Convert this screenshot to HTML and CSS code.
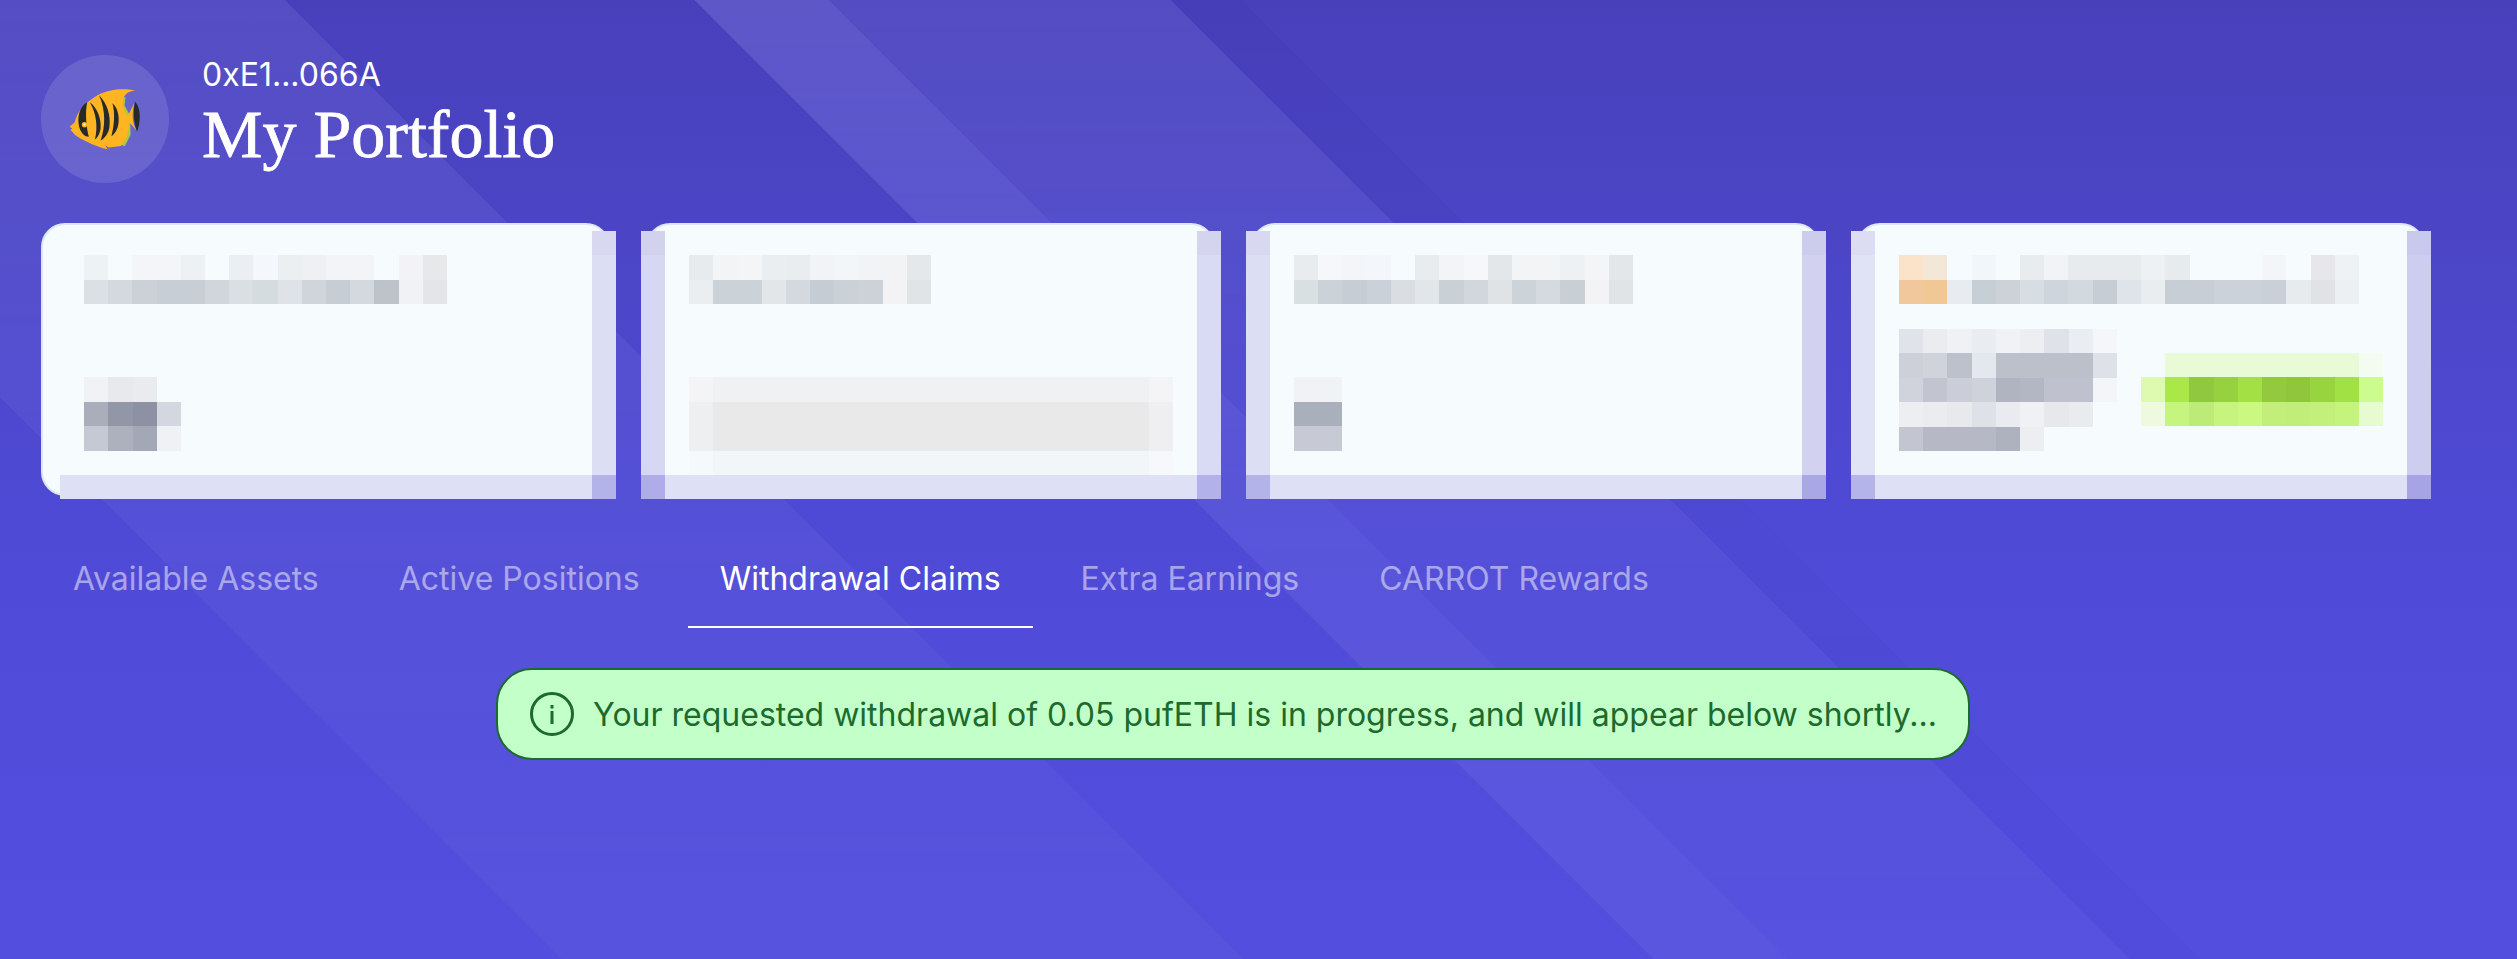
FILE: index.html
```html
<!DOCTYPE html>
<html lang="en">
<head>
    <meta charset="UTF-8">
    <title>My Portfolio</title>
    <link rel="stylesheet" href="styles.css">
</head>
<body>
    <div class="page">
        <header class="header">
            <div class="avatar">
                <svg class="fish" viewBox="118 120 214 190" width="72" height="64">
                    <path fill="#a9c93f" d="M276 150 L286 150 L283 175 L300 205 L301 262 L284 296 L270 290 Z"/>
                    <path fill="#ffb522" d="M120 238 L135 225 C142 195 160 170 205 143 C235 128 280 122 315 131 C295 133 282 140 278 160 C278 178 285 195 292 208 L313 165 C305 195 304 225 320 251 C310 240 305 232 295 224 C298 250 290 280 272 295 L236 300 L225 293 L233 305 C205 298 170 285 137 263 L122 247 L128 244 Z"/>
                    <path fill="#262a2b" d="M172 165 C150 178 143 205 147 232 C150 252 162 268 177 268 C170 240 165 200 172 165 Z"/>
                    <path fill="#262a2b" d="M180 165 C200 180 214 210 212 240 C211 255 204 270 195 276 C204 240 200 200 180 165 Z"/>
                    <path fill="#262a2b" d="M207 144 C232 170 243 205 238 240 C235 258 224 272 212 279 C226 240 228 190 207 144 Z"/>
                    <path fill="#262a2b" d="M247 168 C262 180 268 205 265 228 C263 245 255 260 244 266 C252 235 256 200 247 168 Z"/>
                    <path fill="#262a2b" d="M314 163 C325 175 330 195 328 215 C327 232 324 245 320 252 C310 225 308 195 314 163 Z"/>
                    <circle cx="164" cy="232" r="8" fill="#ffb522"/>
                    <circle cx="164" cy="231" r="3.5" fill="#fff1c9"/>
                </svg>
            </div>
            <div class="title-block">
                <div class="address">0xE1...066A</div>
                <h1 class="title">My Portfolio</h1>
            </div>
        </header>

        <section class="cards">
            <div class="card">
                <svg class="mosaic" viewBox="0 0 15 2" width="363" height="49" preserveAspectRatio="none" shape-rendering="crispEdges">
                    <rect x="0" y="0" width="1" height="1" fill="#eff2f4"/><rect x="2" y="0" width="2" height="1" fill="#f3f5f8"/><rect x="4" y="0" width="1" height="1" fill="#eef1f3"/><rect x="6" y="0" width="1" height="1" fill="#ebeef2"/><rect x="7" y="0" width="1" height="1" fill="#f4f7fb"/><rect x="8" y="0" width="1" height="1" fill="#ebeff2"/><rect x="9" y="0" width="1" height="1" fill="#eef0f4"/><rect x="10" y="0" width="2" height="1" fill="#f2f4f7"/><rect x="13" y="0" width="1" height="1" fill="#f3f3f7"/><rect x="14" y="0" width="1" height="1" fill="#e6e8ea"/>
                    <rect x="0" y="1" width="1" height="1" fill="#dcdfe4"/><rect x="1" y="1" width="1" height="1" fill="#d3d9df"/><rect x="2" y="1" width="1" height="1" fill="#cbd1d7"/><rect x="3" y="1" width="2" height="1" fill="#c7ced5"/><rect x="5" y="1" width="1" height="1" fill="#d1d6dc"/><rect x="6" y="1" width="1" height="1" fill="#d9dfe2"/><rect x="7" y="1" width="1" height="1" fill="#d5dcdf"/><rect x="8" y="1" width="1" height="1" fill="#dfe3e7"/><rect x="9" y="1" width="1" height="1" fill="#d0d5db"/><rect x="10" y="1" width="1" height="1" fill="#c7cdd4"/><rect x="11" y="1" width="1" height="1" fill="#d4d9df"/><rect x="12" y="1" width="1" height="1" fill="#bdc3cb"/><rect x="13" y="1" width="1" height="1" fill="#f0f2f5"/><rect x="14" y="1" width="1" height="1" fill="#e3e5e8"/>
                </svg>
                <div class="card-bottom">
                    <svg class="mosaic" viewBox="0 0 4 3" width="97" height="74" preserveAspectRatio="none" shape-rendering="crispEdges">
                        <rect x="0" y="0" width="1" height="1" fill="#f0f2f6"/><rect x="1" y="0" width="1" height="1" fill="#e7e9ed"/><rect x="2" y="0" width="1" height="1" fill="#e9ebef"/>
                        <rect x="0" y="1" width="1" height="1" fill="#a9aeba"/><rect x="1" y="1" width="1" height="1" fill="#9297a7"/><rect x="2" y="1" width="1" height="1" fill="#8c91a3"/><rect x="3" y="1" width="1" height="1" fill="#d4d7df"/>
                        <rect x="0" y="2" width="1" height="1" fill="#c6c9d3"/><rect x="1" y="2" width="1" height="1" fill="#adb1bd"/><rect x="2" y="2" width="1" height="1" fill="#a3a8b6"/><rect x="3" y="2" width="1" height="1" fill="#eff1f5"/>
                    </svg>
                </div>
                <div class="strip strip-right tone-b"></div>
                <div class="strip-bottom"></div>
            </div>

            <div class="card">
                <svg class="mosaic" viewBox="0 0 10 2" width="242" height="49" preserveAspectRatio="none" shape-rendering="crispEdges">
                    <rect x="0" y="0" width="1" height="1" fill="#e8ebed"/><rect x="1" y="0" width="1" height="1" fill="#f2f4f6"/><rect x="2" y="0" width="1" height="1" fill="#f3f5f7"/><rect x="3" y="0" width="1" height="1" fill="#ebeef1"/><rect x="4" y="0" width="1" height="1" fill="#eaedef"/><rect x="5" y="0" width="1" height="1" fill="#f1f3f6"/><rect x="6" y="0" width="1" height="1" fill="#f3f6f9"/><rect x="7" y="0" width="1" height="1" fill="#f1f3f6"/><rect x="8" y="0" width="1" height="1" fill="#f1f3f5"/><rect x="9" y="0" width="1" height="1" fill="#e5e8ea"/>
                    <rect x="0" y="1" width="1" height="1" fill="#ebeef0"/><rect x="1" y="1" width="2" height="1" fill="#ccd3d8"/><rect x="3" y="1" width="1" height="1" fill="#e2e6e8"/><rect x="4" y="1" width="1" height="1" fill="#d3d9de"/><rect x="5" y="1" width="1" height="1" fill="#c5ccd3"/><rect x="6" y="1" width="1" height="1" fill="#cad1d7"/><rect x="7" y="1" width="1" height="1" fill="#ccd2d8"/><rect x="8" y="1" width="1" height="1" fill="#f3f3f6"/><rect x="9" y="1" width="1" height="1" fill="#e1e4e6"/>
                </svg>
                <div class="card-bottom">
                    <svg class="mosaic mosaic-over" viewBox="0 0 20 4" width="484" height="98" preserveAspectRatio="none" shape-rendering="crispEdges">
                        <rect x="0" y="0" width="1" height="1" fill="#f4f4f6"/><rect x="1" y="0" width="18" height="1" fill="#f0f1f3"/><rect x="19" y="0" width="1" height="1" fill="#f4f4f6"/>
                        <rect x="0" y="1" width="1" height="2" fill="#eeeff0"/><rect x="1" y="1" width="18" height="2" fill="#e9e9ea"/><rect x="19" y="1" width="1" height="2" fill="#efeff1"/>
                        <rect x="0" y="3" width="1" height="1" fill="#f6f9fc"/><rect x="1" y="3" width="18" height="1" fill="#f3f6f9"/><rect x="19" y="3" width="1" height="1" fill="#f6f8fb"/>
                    </svg>
                </div>
                <div class="strip strip-left tone-c"></div>
                <div class="strip strip-right tone-b2"></div>
                <div class="strip-bottom"></div>
            </div>

            <div class="card">
                <svg class="mosaic" viewBox="0 0 14 2" width="339" height="49" preserveAspectRatio="none" shape-rendering="crispEdges">
                    <rect x="0" y="0" width="1" height="1" fill="#e9ecee"/><rect x="1" y="0" width="1" height="1" fill="#f5f7fa"/><rect x="2" y="0" width="1" height="1" fill="#f3f5f8"/><rect x="3" y="0" width="1" height="1" fill="#f3f6fa"/><rect x="5" y="0" width="1" height="1" fill="#e9ecee"/><rect x="6" y="0" width="1" height="1" fill="#f2f4f7"/><rect x="7" y="0" width="1" height="1" fill="#f5f7fa"/><rect x="8" y="0" width="1" height="1" fill="#e4e7ea"/><rect x="9" y="0" width="2" height="1" fill="#f2f4f6"/><rect x="11" y="0" width="1" height="1" fill="#eef1f3"/><rect x="12" y="0" width="1" height="1" fill="#f3f5f7"/><rect x="13" y="0" width="1" height="1" fill="#e4e7ea"/>
                    <rect x="0" y="1" width="1" height="1" fill="#d8e0e2"/><rect x="1" y="1" width="1" height="1" fill="#cbd2d8"/><rect x="2" y="1" width="1" height="1" fill="#c6cdd4"/><rect x="3" y="1" width="1" height="1" fill="#cad1d8"/><rect x="4" y="1" width="1" height="1" fill="#dadde2"/><rect x="5" y="1" width="1" height="1" fill="#e3e6e9"/><rect x="6" y="1" width="1" height="1" fill="#c9d0d6"/><rect x="7" y="1" width="1" height="1" fill="#d2d7dd"/><rect x="8" y="1" width="1" height="1" fill="#dfe3e6"/><rect x="9" y="1" width="1" height="1" fill="#ccd3d9"/><rect x="10" y="1" width="1" height="1" fill="#d4dae0"/><rect x="11" y="1" width="1" height="1" fill="#c8cfd5"/><rect x="12" y="1" width="1" height="1" fill="#f3f3f6"/><rect x="13" y="1" width="1" height="1" fill="#e1e4e7"/>
                </svg>
                <div class="card-bottom">
                    <svg class="mosaic" viewBox="0 0 2 3" width="48" height="74" preserveAspectRatio="none" shape-rendering="crispEdges">
                        <rect x="0" y="0" width="2" height="1" fill="#f0f2f5"/>
                        <rect x="0" y="1" width="2" height="1" fill="#aab0bb"/>
                        <rect x="0" y="2" width="2" height="1" fill="#c7cad4"/>
                    </svg>
                </div>
                <div class="strip strip-left tone-b"></div>
                <div class="strip strip-right tone-d"></div>
                <div class="strip-bottom"></div>
            </div>

            <div class="card">
                <svg class="mosaic" viewBox="0 0 19 2" width="460" height="49" preserveAspectRatio="none" shape-rendering="crispEdges">
                    <rect x="0" y="0" width="1" height="1" fill="#fae3c9"/><rect x="1" y="0" width="1" height="1" fill="#f3e8d8"/><rect x="3" y="0" width="1" height="1" fill="#f2f5fa"/><rect x="5" y="0" width="1" height="1" fill="#e9ecef"/><rect x="6" y="0" width="1" height="1" fill="#f1f3f6"/><rect x="7" y="0" width="3" height="1" fill="#e7ebee"/><rect x="10" y="0" width="1" height="1" fill="#eef1f3"/><rect x="11" y="0" width="1" height="1" fill="#e8ebee"/><rect x="15" y="0" width="1" height="1" fill="#f3f5f9"/><rect x="17" y="0" width="1" height="1" fill="#e7e7eb"/><rect x="18" y="0" width="1" height="1" fill="#eff2f5"/>
                    <rect x="0" y="1" width="1" height="1" fill="#f1c89b"/><rect x="1" y="1" width="1" height="1" fill="#f0c896"/><rect x="2" y="1" width="1" height="1" fill="#e8ebef"/><rect x="3" y="1" width="1" height="1" fill="#c6ced6"/><rect x="4" y="1" width="1" height="1" fill="#ccd2d8"/><rect x="5" y="1" width="1" height="1" fill="#d6dde3"/><rect x="6" y="1" width="1" height="1" fill="#ced5dc"/><rect x="7" y="1" width="1" height="1" fill="#d2d9df"/><rect x="8" y="1" width="1" height="1" fill="#c6cdd4"/><rect x="9" y="1" width="1" height="1" fill="#dfe3ea"/><rect x="10" y="1" width="1" height="1" fill="#eaedf0"/><rect x="11" y="1" width="2" height="1" fill="#c7ced5"/><rect x="13" y="1" width="2" height="1" fill="#cbd2d9"/><rect x="15" y="1" width="1" height="1" fill="#c9d0d8"/><rect x="16" y="1" width="1" height="1" fill="#e8ebee"/><rect x="17" y="1" width="1" height="1" fill="#e1e2e5"/><rect x="18" y="1" width="1" height="1" fill="#edf0f3"/>
                </svg>
                <div class="card-bottom card-split">
                    <svg class="mosaic" viewBox="0 0 9 5" width="218" height="122" preserveAspectRatio="none" shape-rendering="crispEdges">
                        <rect x="0" y="0" width="1" height="1" fill="#e1e3ea"/><rect x="1" y="0" width="1" height="1" fill="#eaecef"/><rect x="2" y="0" width="1" height="1" fill="#eff1f4"/><rect x="3" y="0" width="1" height="1" fill="#e9ecf0"/><rect x="4" y="0" width="1" height="1" fill="#f0f2f5"/><rect x="5" y="0" width="1" height="1" fill="#eceef1"/><rect x="6" y="0" width="1" height="1" fill="#e0e2e9"/><rect x="7" y="0" width="1" height="1" fill="#eaedf1"/><rect x="8" y="0" width="1" height="1" fill="#f4f6f9"/>
                        <rect x="0" y="1" width="1" height="1" fill="#cdd0d9"/><rect x="1" y="1" width="1" height="1" fill="#d0d3db"/><rect x="2" y="1" width="1" height="1" fill="#bdc1cc"/><rect x="3" y="1" width="1" height="1" fill="#e4e7ee"/><rect x="4" y="1" width="4" height="1" fill="#bcc0cb"/><rect x="8" y="1" width="1" height="1" fill="#dfe1e9"/>
                        <rect x="0" y="2" width="1" height="1" fill="#d0d3db"/><rect x="1" y="2" width="1" height="1" fill="#c2c5d0"/><rect x="2" y="2" width="1" height="1" fill="#cbced8"/><rect x="3" y="2" width="1" height="1" fill="#cfd2da"/><rect x="4" y="2" width="1" height="1" fill="#b0b4c0"/><rect x="5" y="2" width="1" height="1" fill="#b3b7c3"/><rect x="6" y="2" width="2" height="1" fill="#bfc2ce"/><rect x="8" y="2" width="1" height="1" fill="#f3f5f8"/>
                        <rect x="0" y="3" width="1" height="1" fill="#eceef2"/><rect x="1" y="3" width="1" height="1" fill="#eaecf0"/><rect x="2" y="3" width="1" height="1" fill="#e7e9ed"/><rect x="3" y="3" width="1" height="1" fill="#dfe1e8"/><rect x="4" y="3" width="1" height="1" fill="#e9ebf1"/><rect x="5" y="3" width="1" height="1" fill="#f0f1f4"/><rect x="6" y="3" width="1" height="1" fill="#e6e8ec"/><rect x="7" y="3" width="1" height="1" fill="#e9ebef"/>
                        <rect x="0" y="4" width="1" height="1" fill="#c3c6d0"/><rect x="1" y="4" width="3" height="1" fill="#b6b9c5"/><rect x="4" y="4" width="1" height="1" fill="#aeb2be"/><rect x="5" y="4" width="1" height="1" fill="#eceef1"/>
                    </svg>
                    <svg class="mosaic mosaic-green" viewBox="0 0 10 3" width="242" height="73" preserveAspectRatio="none" shape-rendering="crispEdges">
                        <rect x="1" y="0" width="8" height="1" fill="#e8fad6"/><rect x="9" y="0" width="1" height="1" fill="#f4fbf1"/>
                        <rect x="0" y="1" width="1" height="1" fill="#ddfab0"/><rect x="1" y="1" width="1" height="1" fill="#a9e847"/><rect x="2" y="1" width="1" height="1" fill="#90c83f"/><rect x="3" y="1" width="1" height="1" fill="#96d140"/><rect x="4" y="1" width="1" height="1" fill="#a2e044"/><rect x="5" y="1" width="1" height="1" fill="#92c93e"/><rect x="6" y="1" width="1" height="1" fill="#90c63c"/><rect x="7" y="1" width="1" height="1" fill="#98d440"/><rect x="8" y="1" width="1" height="1" fill="#a2e144"/><rect x="9" y="1" width="1" height="1" fill="#ccfb8e"/>
                        <rect x="0" y="2" width="1" height="1" fill="#eefadf"/><rect x="1" y="2" width="1" height="1" fill="#c5f47f"/><rect x="2" y="2" width="1" height="1" fill="#bdeb78"/><rect x="3" y="2" width="1" height="1" fill="#c6f47f"/><rect x="4" y="2" width="1" height="1" fill="#cbf880"/><rect x="5" y="2" width="1" height="1" fill="#c2ee79"/><rect x="6" y="2" width="1" height="1" fill="#c0ee79"/><rect x="7" y="2" width="1" height="1" fill="#c2f07b"/><rect x="8" y="2" width="1" height="1" fill="#c5f47e"/><rect x="9" y="2" width="1" height="1" fill="#e6fbcf"/>
                    </svg>
                </div>
                <div class="strip strip-left tone-a"></div>
                <div class="strip strip-right tone-e"></div>
                <div class="strip-bottom"></div>
            </div>
        </section>

        <nav class="tabs">
            <a class="tab">Available Assets</a>
            <a class="tab">Active Positions</a>
            <a class="tab active">Withdrawal Claims</a>
            <a class="tab">Extra Earnings</a>
            <a class="tab">CARROT Rewards</a>
        </nav>

        <div class="notice-row">
            <div class="notice">
                <svg class="notice-icon" viewBox="0 0 44 44" width="44" height="44">
                    <circle cx="22" cy="22" r="20.5" fill="none" stroke="#1c6a2c" stroke-width="3"/>
                    <rect x="20.5" y="19" width="3" height="13" fill="#1c6a2c"/>
                    <rect x="20.5" y="13" width="3" height="3.5" fill="#1c6a2c"/>
                </svg>
                <span>Your requested withdrawal of 0.05 pufETH is in progress, and will appear below shortly...</span>
            </div>
        </div>
    </div>
</body>
</html>
```

FILE: styles.css
```css
body {
    margin: 0;
    font-family: Inter, "Liberation Sans", sans-serif;
    color: #fff;
}
.page {
    position: relative;
    height: 959px;
    overflow: hidden;
    padding: 55px 92px 0 41px;
    box-sizing: border-box;
    background: linear-gradient(to bottom, #4840bb 0, #4b45c5 223px, #4f4ad6 540px, #534ede 959px);
}
/* diagonal light bands behind everything */
.page::before {
    content: "";
    position: absolute;
    inset: 0;
    background: linear-gradient(45deg,
        transparent 397px,
        rgba(180, 182, 255, 0.12) 397px 879px,
        transparent 879px 1169px,
        rgba(180, 182, 255, 0.2) 1169px 1264px,
        rgba(180, 182, 255, 0.11) 1264px 1506px,
        rgba(20, 15, 120, 0.04) 1506px 1556px,
        transparent 1556px);
    -webkit-mask-image: linear-gradient(to bottom, #000 0, rgba(0, 0, 0, 0.55) 50%, rgba(0, 0, 0, 0.4) 100%);
    mask-image: linear-gradient(to bottom, #000 0, rgba(0, 0, 0, 0.55) 50%, rgba(0, 0, 0, 0.4) 100%);
}
.header, .cards, .tabs, .notice-row {
    position: relative;
}

.header {
    display: flex;
    align-items: center;
    gap: 33px;
}
.avatar {
    width: 128px;
    height: 128px;
    border-radius: 50%;
    background-color: rgba(255, 255, 255, 0.12);
    display: flex;
    align-items: center;
    justify-content: center;
}
.fish {
    display: block;
}
.address {
    font-size: 32px;
    line-height: 38px;
    margin-top: -13px;
}
.title {
    margin: 5px 0 0;
    font-family: "Liberation Serif", serif;
    font-weight: 400;
    font-size: 68px;
    line-height: 70px;
    -webkit-text-stroke: 0.8px #fff;
}

.cards {
    display: flex;
    gap: 36px;
    margin-top: 40px;
}
.card {
    position: relative;
    width: 569px;
    height: 273px;
    box-sizing: border-box;
    display: flex;
    flex-direction: column;
    padding: 30px 41px 43px;
    background-color: #f6fbfe;
    border: 2px solid #dce7f3;
    border-radius: 24px;
}
.card-bottom {
    margin-top: auto;
}
.card-split {
    display: flex;
    gap: 24px;
}
.mosaic {
    display: block;
    flex: none;
}
.mosaic-over {
    margin-bottom: -24px;
}
.mosaic-green {
    margin-top: 24px;
}

/* pixelated edge of the redaction */
.strip {
    position: absolute;
    top: 6px;
    width: 24px;
    height: 268px;
    background: linear-gradient(var(--top) 24px, var(--fill) 24px 244px, var(--corner) 244px);
}
.strip-left {
    left: -7px;
}
.strip-right {
    left: 549px;
}
.strip-bottom {
    position: absolute;
    left: 17px;
    top: 250px;
    width: 532px;
    height: 24px;
    background-color: #dee0f5;
}
.tone-a { --top: #dcddf2; --fill: #e0e3f6; --corner: #b4b4ea; }
.tone-b { --top: #d8d9f0; --fill: #dcdef4; --corner: #b3b2e9; }
.tone-b2 { --top: #d4d4ef; --fill: #d9daf4; --corner: #b2b1ea; }
.tone-c { --top: #d2d2ee; --fill: #d6d7f2; --corner: #aeace9; }
.tone-d { --top: #cccced; --fill: #d2d2f0; --corner: #aaa7e7; }
.tone-e { --top: #c8c9ec; --fill: #cdcdf0; --corner: #a7a4e5; }

.tabs {
    display: flex;
    gap: 16px;
    margin-top: 35px;
}
.tab {
    display: flex;
    align-items: center;
    height: 97px;
    box-sizing: border-box;
    padding: 0 32px;
    font-size: 32px;
    color: rgba(255, 255, 255, 0.5);
    border-bottom: 2px solid transparent;
}
.tab.active {
    color: #fff;
    border-bottom-color: #fff;
}

.notice-row {
    display: flex;
    justify-content: center;
    margin-top: 40px;
}
.notice {
    display: flex;
    align-items: center;
    gap: 19px;
    height: 92px;
    box-sizing: border-box;
    padding: 0 31px 0 32px;
    font-size: 32px;
    color: #1c6a2c;
    background-color: #c3ffc9;
    border: 2px solid #1c6a2c;
    border-radius: 36px;
}
.notice-icon {
    flex: none;
}
```
